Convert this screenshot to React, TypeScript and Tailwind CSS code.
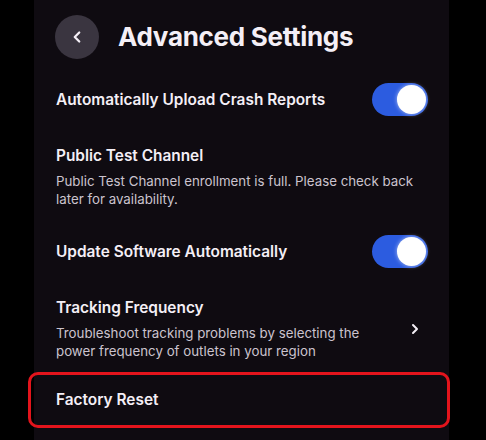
import { ChevronLeft, ChevronRight } from 'lucide-react'

function Toggle() {
  return (
    <div className="w-[56px] h-[33px] rounded-full bg-[#2c5ce0] flex items-center justify-end pr-[2px] shrink-0">
      <div className="w-[29px] h-[29px] rounded-full bg-white shadow-[0_0_4px_rgba(255,255,255,0.6)]" />
    </div>
  )
}

export default function App() {
  return (
    <div
      className="w-[486px] h-[440px] bg-black overflow-hidden pl-[34px]"
      style={{ fontFamily: 'Inter, "Noto Sans", sans-serif' }}
    >
      <div className="w-[415px] h-full bg-[#0f0b11] text-[#f4eff6] flex flex-col">
        <div className="mt-[15px] pl-[21px] flex items-center gap-[19px]">
          <div className="w-[44px] h-[44px] rounded-full bg-[#3a3540] flex items-center justify-center">
            <ChevronLeft size={18} strokeWidth={3} className="text-[#f4eff6]" />
          </div>
          <h1 className="text-[26px] font-bold leading-none tracking-[-0.3px]">Advanced Settings</h1>
        </div>

        <div className="mt-[24px] pl-[22px] pr-[21px] flex items-center justify-between">
          <span className="text-[15.4px] font-semibold">Automatically Upload Crash Reports</span>
          <Toggle />
        </div>

        <div className="mt-[30px] pl-[22px] pr-[21px]">
          <div className="text-[15.4px] font-semibold leading-[20px]">Public Test Channel</div>
          <p className="mt-[6px] text-[13.3px] leading-[18px] text-[#cbc3ce]">
            Public Test Channel enrollment is full. Please check back
            <br />
            later for availability.
          </p>
        </div>

        <div className="mt-[27px] pl-[22px] pr-[21px] flex items-center justify-between">
          <span className="text-[15.4px] font-semibold">Update Software Automatically</span>
          <Toggle />
        </div>

        <div className="mt-[30px] pl-[22px] pr-[26px] flex items-center justify-between">
          <div>
            <div className="text-[15.4px] font-semibold leading-[20px]">Tracking Frequency</div>
            <p className="mt-[6px] text-[13.3px] leading-[18px] text-[#cbc3ce]">
              Troubleshoot tracking problems by selecting the
              <br />
              power frequency of outlets in your region
            </p>
          </div>
          <ChevronRight size={16} strokeWidth={3} className="text-[#f4eff6]" />
        </div>

        <div className="mt-[12px] -ml-[6px] w-[422px] h-[56px] rounded-[10px] border-[3px] border-[#e3141c] flex items-center pl-[25px]">
          <span className="text-[15.4px] font-semibold">Factory Reset</span>
        </div>
      </div>
    </div>
  )
}
